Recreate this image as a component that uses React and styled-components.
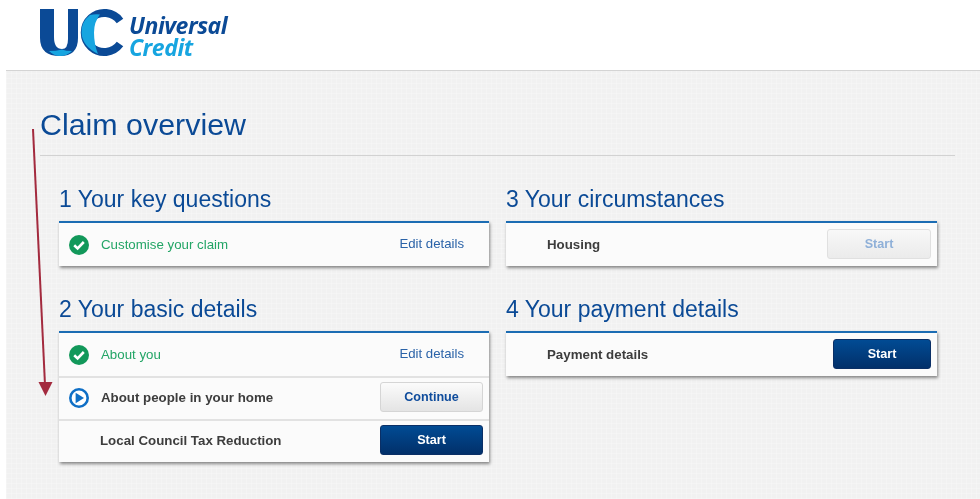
import React from "react";
import styled, { createGlobalStyle } from "styled-components";

const Global = createGlobalStyle`
  html, body { margin: 0; padding: 0; background: #fff; }
  body { font-family: "Liberation Sans", Arial, sans-serif; width: 980px; height: 499px; overflow: hidden; }
  #root { filter: blur(0.35px); }
`;
const Page = styled.div`position: relative; width: 980px; height: 499px; overflow: hidden; background: #fff;`;
const Header = styled.header`height: 70px; box-sizing: border-box; padding: 8px 0 0 40px; display: flex; align-items: flex-start; gap: 3px;`;
const LogoMark = styled.svg`width: 86px; height: 50px; display: block; flex: none;`;
const LogoWords = styled.div`
  font-family: "Open Sans", sans-serif; font-style: italic; font-weight: 700; font-size: 23px; line-height: 21.5px;
  padding-top: 7px; letter-spacing: -0.45px;
`;
const LogoLine = styled.div`color: ${p => p.$c};`;
const Main = styled.main`
  margin-left: 6px; height: 429px; box-sizing: border-box; padding: 0 25px 0 34px;
  border-top: 1px solid #d4d4d4;
  background-color: #f1f1f1;
  background-image:
    repeating-linear-gradient(0deg, rgba(255,255,255,.22) 0 1px, transparent 1px 5px),
    repeating-linear-gradient(90deg, rgba(255,255,255,.22) 0 1px, transparent 1px 5px);
`;
const Title = styled.h1`
  margin: 0; height: 85px; box-sizing: border-box; padding-top: 35px; border-bottom: 1px solid #d2d2d2;
  font-weight: 400; font-size: 30.4px; line-height: 37px; color: #0b4a96;
`;
const Grid = styled.div`display: grid; grid-template-columns: 430px 431px; column-gap: 17px; padding: 29px 0 0 19px;`;
const Section = styled.section`margin-bottom: 29px; grid-column: ${p => p.$col}; grid-row: ${p => p.$row};`;
const SectionTitle = styled.h2`margin: 0 0 7px; font-weight: 400; font-size: 23px; line-height: 29px; color: #0b4a96;`;
const Card = styled.div`
  background: #fbfbfb; border-top: 2px solid #1b6cb3;
  box-shadow: 1px 2px 3px rgba(0,0,0,.45);
`;
const Row = styled.div`
  height: 43px; box-sizing: border-box; display: flex; align-items: center; padding: 0 6px 0 ${p => p.$pad || 10}px;
  & + & { border-top: 2px solid #e2e2e2; padding-bottom: 2px; }
`;
const RowIcon = styled.svg`width: 20px; height: 20px; flex: none; margin-right: 12px;`;
const Done = styled.span`color: #23a566; font-size: 13.3px; flex: 1;`;
const Label = styled.span`color: #3d3d3d; font-size: 13.3px; font-weight: 700; flex: 1;`;
const EditLink = styled.a`color: #2b63a8; font-size: 13.2px; margin-right: 19px; margin-bottom: 2px;`;
const Button = styled.button`
  width: ${p => p.$w || 103}px; height: 30px; padding: 0; margin-bottom: 2px; border-radius: 3px;
  font-family: inherit; font-size: 12.6px; font-weight: 700;
  ${p => p.$variant === "primary" ? `
    color: #fff; border: 1px solid #0a2f66; background: linear-gradient(#014b94, #02306a);
  ` : p.$variant === "disabled" ? `
    color: #8fb0d8; border: 1px solid #e0e0e0; background: linear-gradient(#f8f8f8, #ebebeb);
  ` : `
    color: #0f4c9c; border: 1px solid #d5d5d5; background: linear-gradient(#fbfbfb, #e4e4e4);
  `}
`;
const Arrow = styled.svg`position: absolute; left: 25px; top: 125px; width: 30px; height: 275px; pointer-events: none;`;

const Check = () => (
  <RowIcon viewBox="0 0 20 20">
    <circle cx="10" cy="10" r="10" fill="#12985a" />
    <path d="M5.2 10.2 8.6 13.4 14.8 7" fill="none" stroke="#fff" strokeWidth="2.6" />
  </RowIcon>
);
const Play = () => (
  <RowIcon viewBox="0 0 20 20">
    <circle cx="10" cy="10" r="8.7" fill="#fff" stroke="#0f6fc6" strokeWidth="2.6" />
    <path d="M6.6 4.8 15 10 6.600 15.200Z" fill="#0f6fc6" />
  </RowIcon>
);

export default function App() {
  return (
    <Page>
      <Global />
      <Header>
        <LogoMark viewBox="0 0 86 50">
          <path d="M0 1H14V29Q14 41 22 41 Q28 41 28 31V1H38V30Q38 48 20 48 Q0 48 0 30Z" fill="#0b4a96" />
          <path d="M9 43Q14 48 20 48 Q27 48 32 43 Q26 43 22 41.500 Q16 43 9 43Z" fill="#17a5e0" />
          <path d="M80 13A19.500 19.500 0 1 0 80 36" fill="none" stroke="#0b4a96" strokeWidth="8" />
          <path d="M50 7Q41 14 41.500 24.500 Q42 38 58 46 Q54 36 54 24.500 Q54 14 60 6.500 Q55 6 50 7Z" fill="#17a5e0" />
        </LogoMark>
        <LogoWords>
          <LogoLine $c="#0b4a96">Universal</LogoLine>
          <LogoLine $c="#17a5e0">Credit</LogoLine>
        </LogoWords>
      </Header>
      <Main>
        <Title>Claim overview</Title>
        <Grid>
          <Section $col={1} $row={1}>
            <SectionTitle>1 Your key questions</SectionTitle>
            <Card>
              <Row><Check /><Done>Customise your claim</Done><EditLink>Edit details</EditLink></Row>
            </Card>
          </Section>
          <Section $col={2} $row={1}>
            <SectionTitle>3 Your circumstances</SectionTitle>
            <Card>
              <Row $pad={41}><Label>Housing</Label><Button $variant="disabled" $w={104}>Start</Button></Row>
            </Card>
          </Section>
          <Section $col={1} $row={2}>
            <SectionTitle>2 Your basic details</SectionTitle>
            <Card>
              <Row><Check /><Done>About you</Done><EditLink>Edit details</EditLink></Row>
              <Row><Play /><Label>About people in your home</Label><Button>Continue</Button></Row>
              <Row $pad={41}><Label>Local Council Tax Reduction</Label><Button $variant="primary">Start</Button></Row>
            </Card>
          </Section>
          <Section $col={2} $row={2}>
            <SectionTitle>4 Your payment details</SectionTitle>
            <Card>
              <Row $pad={41}><Label>Payment details</Label><Button $variant="primary" $w={98}>Start</Button></Row>
            </Card>
          </Section>
        </Grid>
      </Main>
      <Arrow viewBox="0 0 30 275">
        <path d="M8 4 20 260" stroke="#a32a3e" strokeWidth="2" fill="none" />
        <path d="M13.500 257 27.500 257 20.500 271Z" fill="#a32a3e" />
      </Arrow>
    </Page>
  );
}
